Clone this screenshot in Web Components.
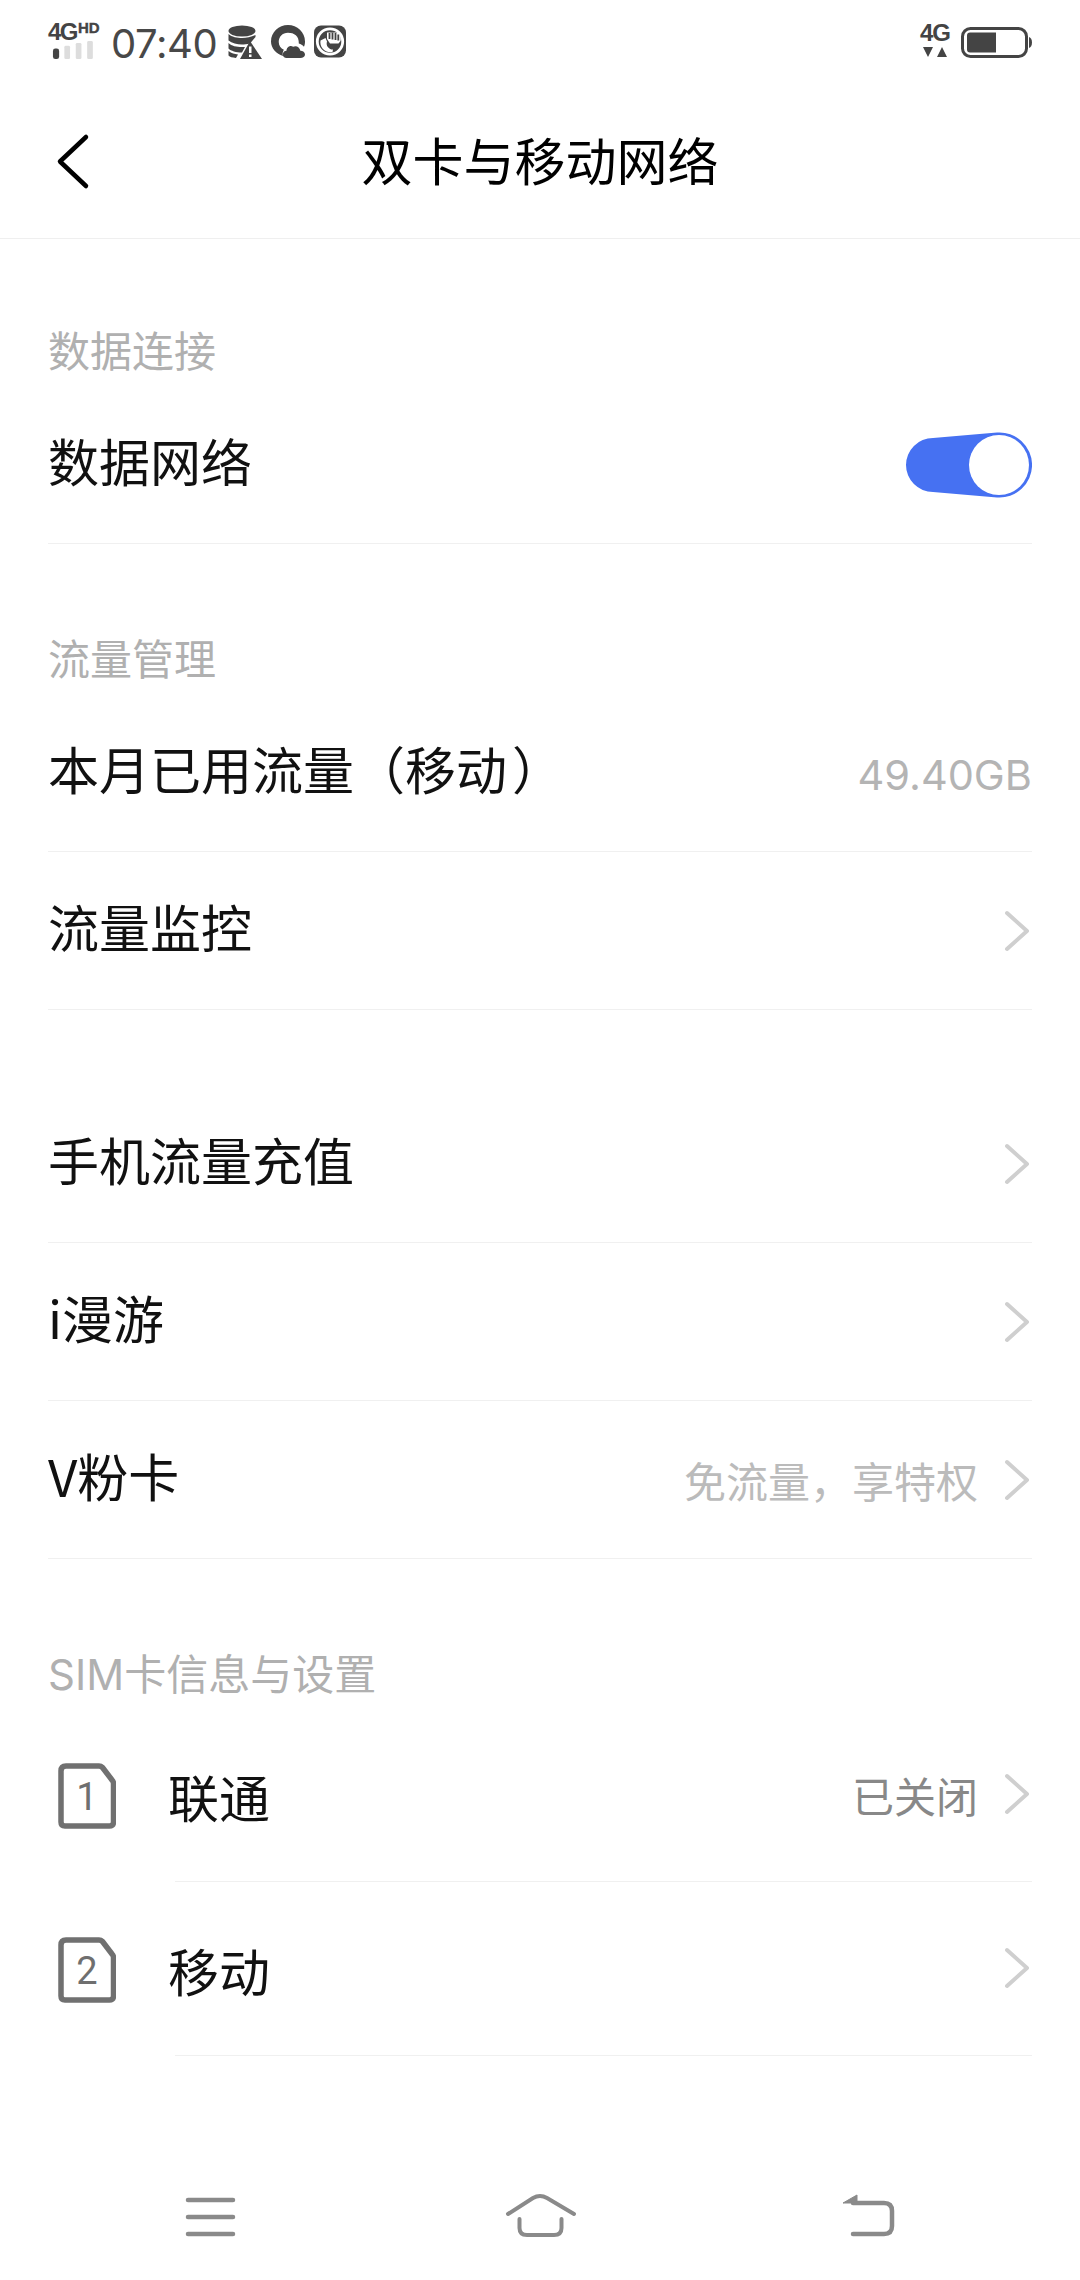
<!DOCTYPE html>
<html lang="zh-CN">
<head>
<meta charset="utf-8">
<title>双卡与移动网络</title>
<style>
html,body{margin:0;padding:0;background:#fff}
body{width:1080px;height:2280px;overflow:hidden;display:flex;flex-direction:column;font-family:"Noto Sans CJK SC","Noto Sans",sans-serif}
</style>
</head>
<body>
<status-bar></status-bar>
<app-header>双卡与移动网络</app-header>
<section-label style="--label-h:147px;--label-pad:89px">数据连接</section-label>
<list-row><span>数据网络</span><blue-switch slot="end"></blue-switch></list-row>
<section-label style="--label-h:150px">流量管理</section-label>
<list-row><span>本月已用流量（移<span style="letter-spacing:5px">动</span>）</span><span slot="value" style="font-family:Inter,Roboto,sans-serif;font-size:41.500px;position:relative;top:-1px">49.40GB</span></list-row>
<list-row chevron><span>流量监控</span></list-row>
<list-gap></list-gap>
<list-row chevron><span>手机流量充值</span></list-row>
<list-row chevron><span>i漫游</span></list-row>
<list-row chevron value-tone="light"><span>V粉卡</span><span slot="value">免流量，享特权</span></list-row>
<section-label>SIM卡信息与设置</section-label>
<list-row chevron tall value-tone="dark"><sim-icon slot="lead" n="1"></sim-icon><span>联通</span><span slot="value">已关闭</span></list-row>
<list-row chevron tall><sim-icon slot="lead" n="2"></sim-icon><span>移动</span></list-row>
<nav-bar></nav-bar>
<script>
const CJK='"Noto Sans CJK SC","Noto Sans",sans-serif';
class Base extends HTMLElement{
  constructor(){super();this.attachShadow({mode:'open'}).innerHTML=this.constructor.html}
}
class StatusBar extends Base{static html=`<style>
:host{display:flex;align-items:flex-start;height:80px;padding:0 48px;box-sizing:border-box;justify-content:space-between;color:#444;font-family:"Liberation Sans",Arial,sans-serif}
.l,.r{display:flex;align-items:flex-start}
.net{width:52px;height:38px;margin-top:22px;display:flex;flex-direction:column}
.t4{display:flex;align-items:flex-start;font-weight:700;font-size:24px;line-height:19px;letter-spacing:-1.5px;height:19px;white-space:nowrap}
.t4 small{font-size:15px;line-height:11px;font-weight:700;letter-spacing:0;margin-left:1px;-webkit-text-stroke:.4px #444}
.time{font-family:Inter,Roboto,sans-serif;font-size:40px;line-height:40px;margin:24px 0 0 11px;width:106px;letter-spacing:-.4px;white-space:nowrap;color:#484848}
svg{display:block}
.ic{margin-top:25px}
.g4{width:34px;display:flex;flex-direction:column;align-items:center;margin-top:23px;font-weight:700;font-size:24px;line-height:20px;letter-spacing:-1px}
.r{gap:9px}
</style>
<div class="l">
<div class="net"><div class="t4">4G<small>HD</small></div>
<svg width="46" height="20" viewBox="0 0 46 20"><rect x="4" y="8" width="6.500" height="11" rx="2.500" fill="#444"/><rect x="16" y="5" width="6" height="14" rx="1.500" fill="#ddd"/><rect x="28" y="2" width="6" height="17" rx="1.500" fill="#ddd"/><rect x="40" y="0" width="6" height="19" rx="1.500" fill="#ddd"/></svg></div>
<div class="time">07:40</div>
<svg class="ic" style="margin-left:11px" width="34" height="35" viewBox="0 0 34 35"><ellipse cx="14" cy="6" rx="13.500" ry="5.500" fill="#444"/><path d="M.5 9c3 3 9 4 13.500 4s9-1 13.500-3v2L22 18.500c-3 .8-6 1-8 1-5 0-10-1.500-13.500-4zM.5 18c3 3 8 4 13.500 4 1 0 2 0 3-.1L14 27.500c-6 0-11-1.500-13.500-4zM.5 26c3 2.500 6 3 9.500 3.500L8 33C4 32.500 2 32 .5 30.500z" fill="#444"/><path d="M22 16 34 34H12z" fill="#444"/><rect x="21" y="21.500" width="2.500" height="6.500" fill="#fff"/><rect x="21" y="29.500" width="2.500" height="2.500" fill="#fff"/></svg>
<svg class="ic" style="margin-left:9px" width="34" height="33" viewBox="0 0 33 32"><path d="M16.500 0C25.500 0 33 7 33 16c0 2-.3 3.500-1 5-1.500-1.500-3-2.500-5-3 .3-7.500-4.500-10.500-10.500-10.500-5.500 0-9 4-9 9 0 3.500 2 6 5 7.500-1.200 2-1.500 4-.8 6C5 28 0 22.500 0 16 0 7 7.500 0 16.500 0z" fill="#444"/><path d="M15 32c-2 0-3.500-1.500-3.500-3.500s1.500-3.500 3.500-3.500c0-3.500 3.500-6 6.500-4 3-1.500 6.500 .5 7 4 2.500 0 4.500 1.500 4.500 3.500S31 32 28.500 32z" fill="#444"/></svg>
<svg class="ic" style="margin-left:9px" width="32" height="33" viewBox="0 0 32 33"><rect width="32" height="32" y=".5" rx="7" fill="#444"/><circle cx="16" cy="16.500" r="12.700" fill="#444" stroke="#fff" stroke-width="2.800"/><path d="M6.500 15.500l5-2.500 1.500 3.500a6 6 0 0 0 6 8l-.5 2.600C10 28 5.500 21.500 6.500 15.500z" fill="#fff"/><path d="M13 7.500l11.500 0a10 10 0 0 1 2 8.500l-2 2.500H16L13 14z" fill="#fff"/><path d="M15.500 8v6M18.500 7.500v7M21.500 8v7M24.300 9.500v6" fill="none" stroke="#444" stroke-width="1.800"/></svg>
</div>
<div class="r">
<div class="g4">4G<svg width="26" height="11" viewBox="0 0 26 11" style="margin-top:4px"><path d="M1 0h10L6 10zM15 10h10L20 0z" fill="#444"/></svg></div>
<svg style="margin-top:27px" width="71" height="31" viewBox="0 0 71 31"><rect x="1.500" y="1.500" width="64" height="28" rx="8" fill="none" stroke="#444" stroke-width="3"/><path d="M9 5.500h26v20H9a3 3 0 0 1-3-3V8.500a3 3 0 0 1 3-3z" fill="#444"/><path d="M68 10c1.800.5 3 2.500 3 5.500s-1.200 5-3 5.500z" fill="#444"/></svg>
</div>`}
class AppHeader extends Base{static html=`<style>
:host{display:flex;position:relative;align-items:center;justify-content:center;height:159px;box-sizing:border-box;border-bottom:1px solid #efefef;font-family:${CJK};font-size:51px;color:#000;padding-bottom:1px}
svg{position:absolute;left:52px;top:50px}
</style><svg width="44" height="62" viewBox="0 0 44 62"><path d="M34 7 8 31.500 34 56" fill="none" stroke="#000" stroke-width="4.500" stroke-linecap="round" stroke-linejoin="round"/></svg><slot></slot>`}
class SectionLabel extends Base{static html=`<style>
:host{display:block;box-sizing:border-box;height:var(--label-h,149px);padding:var(--label-pad,92px) 48px 0;font-family:Inter,${CJK};font-size:42px;line-height:48px;color:#b0b0b0;white-space:nowrap}
</style><slot></slot>`}
class ListRow extends Base{static html=`<style>
:host{display:block;padding:0 48px;font-family:${CJK};font-size:51px;color:#111}
.row{height:157px;border-bottom:1px solid #f0f0f0;display:flex;align-items:center;position:relative;white-space:nowrap}
:host([tall]) .row{height:173px;border-bottom:0}
:host([tall]) .rule{display:block}
.rule{display:none;height:1px;background:#f0f0f0;margin-left:127px}
.main{flex:1;margin-top:-10px}
:host([tall]) .main{margin-top:2px}
.lead{display:none}
:host([tall]) .lead{display:block;width:120px;flex:none}
.val{font-size:42px;color:#b4b4b4}
:host([value-tone=dark]) .val{color:#888}
:host([value-tone=light]) .val{color:#bbb}
.chev{display:none;margin-left:26px;margin-right:2px}
:host([chevron]) .chev{display:block}
:host([tall]) .chev{margin-top:-2px}
</style><div class="row"><div class="lead"><slot name="lead"></slot></div><div class="main"><slot></slot></div><div class="val"><slot name="value"></slot></div><slot name="end"></slot><svg class="chev" width="26" height="42" viewBox="0 0 26 42"><path d="M3 3 23 21 3 39" fill="none" stroke="#cfcfcf" stroke-width="4" stroke-linecap="round" stroke-linejoin="round"/></svg></div><div class="rule"></div>`}
class ListGap extends Base{static html=`<style>:host{display:block;height:75px}</style>`}
class BlueSwitch extends Base{static html=`<style>:host{display:block;width:127px;height:66px}svg{display:block}</style><svg width="127" height="66" viewBox="0 0 127 66"><path d="M28 6 92 .6A32.500 32.500 0 1 1 92 65.400L28 60A27 27 0 0 1 28 6z" fill="#4671f2"/><circle cx="94" cy="33" r="30" fill="#fff"/></svg>`}
class SimIcon extends Base{static html=`<style>
:host{display:block;position:relative;width:58px;height:66px;margin-left:10px;margin-top:2px}
svg{display:block}
span{position:absolute;left:0;right:0;top:14px;text-align:center;font-family:Roboto,"Liberation Sans",sans-serif;font-size:38px;line-height:40px;color:#6f6f6f}
</style><svg width="58" height="66" viewBox="0 0 58 66"><path d="M8 3h33q2 0 3.500 1.500L54 17q1.500 1.500 1.500 3.500V59q0 4-4 4H7q-4 0-4-4V8q0-5 5-5z" fill="none" stroke="#707070" stroke-width="5.500" stroke-linejoin="round"/></svg><span></span>`;
  connectedCallback(){this.shadowRoot.querySelector('span').textContent=this.getAttribute('n')}
}
class NavBar extends Base{static html=`<style>
:host{display:flex;margin-top:auto;height:90px;flex:none;box-sizing:border-box;align-items:flex-start}
svg{display:block;flex:none}
</style>
<svg style="margin-left:184px" width="54" height="50" viewBox="184 2190 54 50"><path d="M188 2200h45M188 2217h45M188 2234h45" fill="none" stroke="#8a8a8a" stroke-width="4.500" stroke-linecap="round"/></svg>
<svg style="margin-left:267px" width="72" height="50" viewBox="505 2190 72 50"><path d="M508 2214 533 2198Q540 2194 547 2198L574 2214" fill="none" stroke="#8a8a8a" stroke-width="4" stroke-linecap="round"/><path d="M519.500 2219V2228Q519.500 2235 527 2235H554Q561.500 2235 561.500 2228V2219" fill="none" stroke="#8a8a8a" stroke-width="4" stroke-linecap="round"/></svg>
<svg style="margin-left:263px" width="56" height="50" viewBox="840 2190 56 50"><path d="M843 2203 857 2195V2203z" fill="#8a8a8a" stroke="#8a8a8a" stroke-width="1" stroke-linejoin="round"/><path d="M853 2203H884Q892 2203 892 2211V2226Q892 2234 884 2234H853" fill="none" stroke="#8a8a8a" stroke-width="4.500" stroke-linecap="round"/></svg>`}
[['status-bar',StatusBar],['app-header',AppHeader],['section-label',SectionLabel],['list-row',ListRow],['list-gap',ListGap],['blue-switch',BlueSwitch],['sim-icon',SimIcon],['nav-bar',NavBar]].forEach(([n,c])=>customElements.define(n,c));
</script>
</body>
</html>
